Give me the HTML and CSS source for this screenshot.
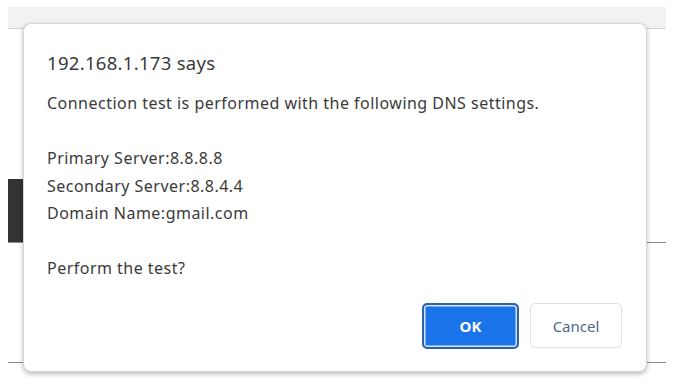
FILE: index.html
```html
<!DOCTYPE html>
<html>
<head>
    <title>Connection test</title>
    <link rel="stylesheet" href="styles.css">
</head>
<body>
    <div class="page">
        <div class="topbar"></div>
        <div class="panel">
            <div class="side-block"></div>
        </div>
        <div class="panel-low"></div>
    </div>

    <!-- alert dialog -->
    <div class="dialog">
        <div class="dialog-title">192.168.1.173 says</div>
        <div class="dialog-message">Connection test is performed with the following DNS settings.

Primary Server:8.8.8.8
Secondary Server:8.8.4.4
Domain Name:gmail.com

Perform the test?</div>
        <div class="dialog-buttons">
            <button class="btn btn-ok">OK</button>
            <button class="btn btn-cancel">Cancel</button>
        </div>
    </div>
</body>
</html>
```

FILE: styles.css
```css
body {
    margin: 0;
    background-color: #ffffff;
    font-family: "Noto Sans", "Open Sans", Arial, sans-serif;
}
.page {
    padding: 7px 7px 0 8px;
}
.topbar {
    height: 21px;
    background-color: #f2f2f2;
    border-bottom: 1px solid #d4d4d4;
}
.panel {
    margin-top: 150px;
    height: 63px;
    border-bottom: 1px solid #8a8a8a;
}
.side-block {
    width: 15px;
    height: 63px;
    background-color: #333333;
}
.panel-low {
    height: 119px;
    border-bottom: 1px solid #8a8a8a;
}
.dialog {
    position: absolute;
    left: 23px;
    top: 23px;
    width: 624px;
    height: 349px;
    box-sizing: border-box;
    padding: 27px 24px 0 23px;
    background: #ffffff;
    border: 1px solid #d6d6d6;
    border-radius: 8px;
    box-shadow: 0 2px 5px rgba(0, 0, 0, 0.28);
    color: #3a3a3a;
}
.dialog-title {
    font-size: 18.5px;
    letter-spacing: 0.3px;
    line-height: 24px;
}
.dialog-message {
    margin-top: 15px;
    font-size: 16px;
    letter-spacing: 0.48px;
    line-height: 27.5px;
    white-space: pre-line;
}
.dialog-buttons {
    display: flex;
    justify-content: flex-end;
    align-items: center;
    gap: 11px;
    margin-top: 20px;
}
.btn {
    font-family: "Noto Sans", "Open Sans", Arial, sans-serif;
    font-size: 15px;
    height: 45px;
    border-radius: 5px;
    cursor: pointer;
}
.btn-ok {
    width: 97px;
    height: 46px;
    background-color: #1a73e8;
    color: #ffffff;
    font-weight: bold;
    border: 2px solid #2f62a6;
    box-shadow: inset 0 0 0 1.5px #d3e3fa;
}
.btn-cancel {
    width: 92px;
    background-color: #ffffff;
    color: #51668f;
    border: 1px solid #e0e0e0;
}
```
